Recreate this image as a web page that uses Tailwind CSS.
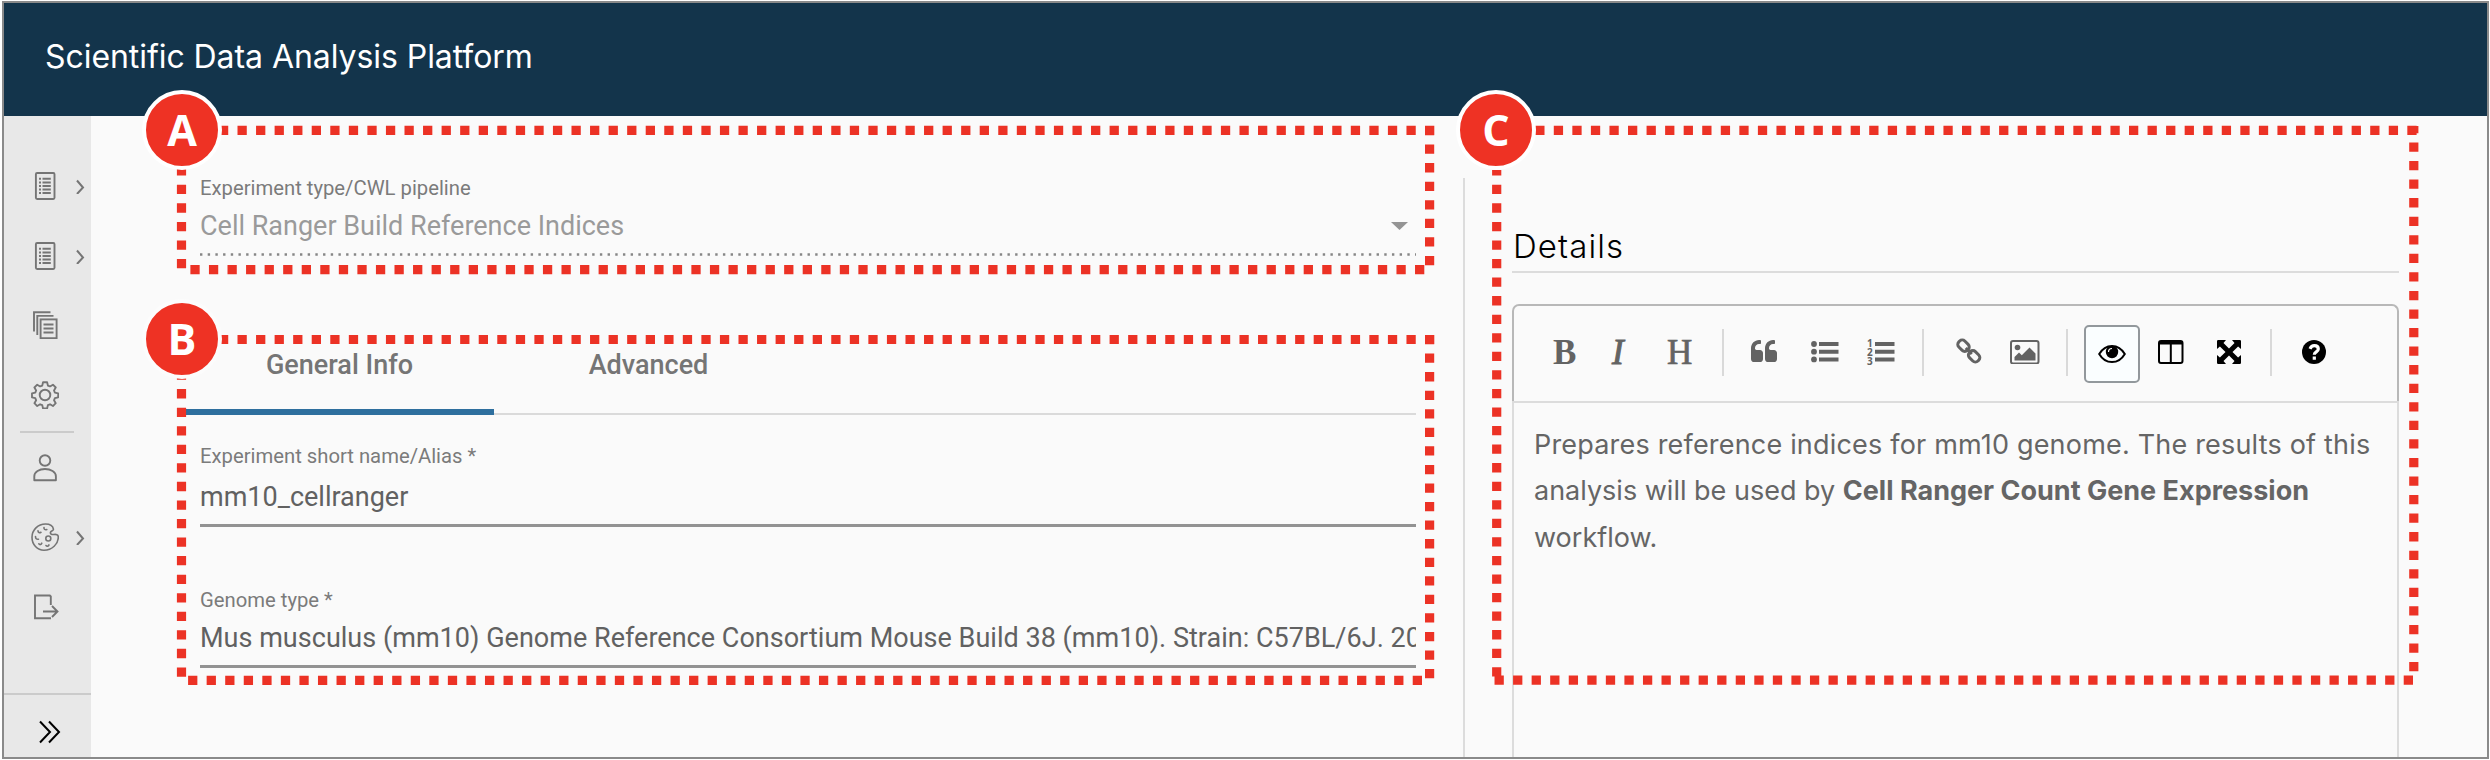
<!DOCTYPE html>
<html lang="en">
<head>
<meta charset="utf-8">
<title>Scientific Data Analysis Platform</title>
<script src="https://cdn.jsdelivr.net/npm/@tailwindcss/browser@4"></script>
</head>
<body class="relative h-[760px] w-[2490px] overflow-hidden bg-white pt-px pl-[2px] font-['Roboto',sans-serif]">
<div class="flex h-[758px] w-[2487px] flex-col border-2 border-[#8a8a8a] bg-[#fafafa]">
  <header class="flex h-[113px] shrink-0 items-center bg-[#13344b] pb-[5px] pl-[41px]">
    <h1 class="font-['Inter',sans-serif] text-[32px] leading-none tracking-[-0.06px] text-white">Scientific Data Analysis Platform</h1>
  </header>
  <div class="flex min-h-0 flex-1">
    <nav class="flex w-[87px] shrink-0 flex-col bg-[#e8e8e8] pt-[35px] text-[#757575]">
      <a class="flex h-[69.7px] items-center pl-[27px]">
        <svg class="size-7" viewBox="0 0 28 28" fill="none" stroke="currentColor" stroke-width="1.9"><rect x="4.9" y="1" width="18.6" height="26" rx="1.2"/><path d="M11.5 6.8h8.300M11.500 10.500h8.300M11.500 14h8.300M11.500 17.500h8.300M11.500 21h8.300M8 6.800h2M8 10.500h2M8 14h2M8 17.500h2M8 21h2"/></svg>
        <svg class="ml-4 h-4 w-2.5" viewBox="0 0 10 16" fill="none" stroke="currentColor" stroke-width="2"><path d="M2 2.500l6 7-6 6.500"/></svg>
      </a>
      <a class="flex h-[69.7px] items-center pl-[27px]">
        <svg class="size-7" viewBox="0 0 28 28" fill="none" stroke="currentColor" stroke-width="1.9"><rect x="4.9" y="1" width="18.6" height="26" rx="1.2"/><path d="M11.5 6.8h8.300M11.500 10.500h8.300M11.500 14h8.300M11.500 17.500h8.300M11.500 21h8.300M8 6.800h2M8 10.500h2M8 14h2M8 17.500h2M8 21h2"/></svg>
        <svg class="ml-4 h-4 w-2.5" viewBox="0 0 10 16" fill="none" stroke="currentColor" stroke-width="2"><path d="M2 2.500l6 7-6 6.500"/></svg>
      </a>
      <a class="flex h-[69.7px] items-center pl-[27px]">
        <svg class="size-7" viewBox="0 0 28 28" fill="none" stroke="currentColor" stroke-width="1.9"><rect x="9.600" y="8.400" width="16" height="18.800"/><path d="M3 20.500V1.300h16.500M6.300 24V4.900H22.500M12.500 13.500h10M12.500 17.500h10M12.500 21.500h10"/></svg>
      </a>
      <a class="flex h-[69.7px] items-center pl-[27px]">
        <svg class="size-7" viewBox="0 0 28 28" fill="none" stroke="currentColor" stroke-width="1.9" stroke-linejoin="round"><circle cx="14" cy="14" r="5.300"/><path d="M11.900 1h4.200l.8 3.400 2.200.9 3-1.800 2.900 2.900-1.800 3 .9 2.200 3.400.8v4.200l-3.400.8-.9 2.200 1.800 3-2.900 2.900-3-1.800-2.200.9-.8 3.400h-4.200l-.8-3.400-2.200-.9-3 1.800L3 22.600l1.800-3-.9-2.200-3.400-.8v-4.200l3.400-.8.9-2.200-1.800-3L5.900 3.500l3 1.800 2.200-.9z" transform="translate(.5 .3) scale(.97)"/></svg>
      </a>
      <hr class="mx-4 mt-[1px] h-[2px] w-[54px] shrink-0 border-0 bg-[#cbcbcb]">
      <a class="flex h-[69.7px] items-center pl-[27px]">
        <svg class="size-7" viewBox="0 0 28 28" fill="none" stroke="currentColor" stroke-width="1.9" stroke-linejoin="round"><circle cx="14" cy="6.500" r="5.300"/><path d="M3.300 26.300v-4c0-4.500 5-7.300 10.700-7.300s10.900 2.800 10.900 7.300v4z"/></svg>
      </a>
      <a class="flex h-[69.7px] items-center pl-[27px]">
        <svg class="size-7" viewBox="0 0 28 28" fill="none" stroke="currentColor" stroke-width="1.600" stroke-linejoin="round" stroke-linecap="round"><path d="M22.500 6.300C21.900 3 18.500 1 14.500 1 7 1 1 7 1 14.300 1 21.800 6.300 27.200 13 27.200c8 0 14.300-6.200 14.300-13.200 0-2.500-2.300-2.800-4.300-2.500-2.500.3-4-.6-3.500-2.300.4-1.200 3-1.200 3-2.900z"/><circle cx="17.300" cy="15.500" r="2.500"/><path d="M13 4.500c-.3 1.800 1 2.700 2.800 2M7 7.800c.2 1.700 1.500 2.400 3 1.500M4.500 13.500c0 2 1 3 3 2.700M7.800 20.800c.9 1.200 2.400 1 3-.6M15 22.500c.9 1.200 2.400 1 3-.6"/></svg>
        <svg class="ml-4 h-4 w-2.5" viewBox="0 0 10 16" fill="none" stroke="currentColor" stroke-width="2"><path d="M2 2.500l6 7-6 6.500"/></svg>
      </a>
      <a class="flex h-[69.7px] items-center pl-[27px]">
        <svg class="size-7" viewBox="0 0 28 28" fill="none" stroke="currentColor" stroke-width="1.9"><path d="M19.800 12V3.500l-1-1H4V25.300h16M12 18.500h14.500M21 13l5.500 5.500L21 24"/></svg>
      </a>
      <div class="mt-auto flex h-[64px] items-start border-t-2 border-[#cbcbcb] pt-[25px] pl-[35px] text-black">
        <svg class="h-6 w-[22px]" viewBox="0 0 22 24" fill="none" stroke="currentColor" stroke-width="2"><path d="M1 1.500L11 12 1 22.500M10 1.500L20 12 10 22.500"/></svg>
      </div>
    </nav>

    <main class="flex w-[1372px] shrink-0 flex-col pr-[47px] pl-[94px]">
      <section class="flex flex-col pt-[60px] pl-[15px]">
        <label class="text-[20.25px] leading-6 text-[#7b7b7b]">Experiment type/CWL pipeline</label>
        <div class="mt-[10px] flex h-8 items-center justify-between pr-2">
          <span class="text-[27px] leading-8 text-[#9a9a9a]">Cell Ranger Build Reference Indices</span>
          <svg class="h-2 w-[17px]" viewBox="0 0 17 8" fill="#949494"><path d="M0 0h17L8.500 8z"/></svg>
        </div>
        <svg class="mt-[11px] h-[3px] w-full" stroke="#868686" stroke-width="2.400"><path d="M0 1.500H1216" stroke-dasharray="2.400 5.290"/></svg>
      </section>
      <div class="mt-[81px] flex h-[78px] border-b-2 border-[#dadada] pt-[12px] text-[27px] leading-8 font-medium text-[#757575]">
        <div class="flex h-[66px] w-[309px] justify-center border-b-6 border-[#2e6f9e]">General Info</div>
        <div class="w-[309px] text-center">Advanced</div>
      </div>
      <section class="flex flex-col pt-[29px] pl-[15px]">
        <label class="text-[20.25px] leading-6 text-[#7b7b7b]">Experiment short name/Alias *</label>
        <div class="mt-[13px] h-[46px] border-b-3 border-[#929292] text-[27px] leading-8 text-[#616161]">mm10_cellranger</div>
        <label class="mt-[61px] text-[20.25px] leading-6 text-[#7b7b7b]">Genome type *</label>
        <div class="mt-[10px] h-[46px] overflow-hidden border-b-3 border-[#929292] text-[27px] leading-8 tracking-[0.02px] whitespace-nowrap text-[#616161]">Mus musculus (mm10) Genome Reference Consortium Mouse Build 38 (mm10). Strain: C57BL/6J. 20</div>
      </section>
    </main>

    <div class="mt-[62px] w-[2px] shrink-0 bg-[#dcdcdc]"></div>

    <aside class="ml-[47px] flex w-[887px] shrink-0 flex-col pt-[110px] font-['Inter',sans-serif]">
      <h2 class="h-[47px] border-b-2 border-[#dcdcdc] pl-px text-[33px] leading-10 font-light tracking-[1.1px] text-black">Details</h2>
      <div class="mt-[31px] flex h-[97px] shrink-0 rounded-t-[7px] border-2 border-b-0 border-[#b8b8b8] text-[#636363]">
        <div class="flex w-full items-center pb-[3px]">
          <div class="flex w-[208px] pl-[39px] font-['Liberation_Serif',serif] text-[35px] leading-none">
            <b class="w-[58px]">B</b><i class="w-[56px] pl-px [-webkit-text-stroke:1px_#636363]">I</i><span class="[-webkit-text-stroke:0.7px_#636363]">H</span>
          </div>
          <div class="h-[47px] w-[2px] bg-[#d9d9d9]"></div>
          <svg class="ml-[26px] size-7" viewBox="0 0 1792 1792" fill="currentColor"><path d="M832 960v384q0 80-56 136t-136 56h-384q-80 0-136-56t-56-136v-704q0-104 40.500-198.500t109.500-163.500 163.500-109.500 198.500-40.500h64q26 0 45 19t19 45v128q0 26-19 45t-45 19h-64q-106 0-181 75t-75 181v32q0 40 28 68t68 28h224q80 0 136 56t56 136zm896 0v384q0 80-56 136t-136 56h-384q-80 0-136-56t-56-136v-704q0-104 40.500-198.500t109.500-163.500 163.500-109.500 198.500-40.500h64q26 0 45 19t19 45v128q0 26-19 45t-45 19h-64q-106 0-181 75t-75 181v32q0 40 28 68t68 28h224q80 0 136 56t56 136z"/></svg>
          <svg class="ml-[33px] size-7" viewBox="0 0 28 28" fill="currentColor"><circle cx="3" cy="6" r="2.900"/><circle cx="3" cy="13.700" r="2.900"/><circle cx="3" cy="21.400" r="2.900"/><path d="M8 4h19.500v4H8zM8 11.700h19.500v4H8zM8 19.400h19.500v4H8z"/></svg>
          <svg class="ml-[28px] size-7 overflow-visible" viewBox="0 0 28 28" fill="currentColor"><path d="M8 4h19.500v4H8zM8 11.700h19.500v4H8zM8 19.400h19.500v4H8z"/><g font-family="Noto Sans, sans-serif" font-size="10" font-weight="700"><text x="0" y="8.500">1</text><text x="0" y="17.500">2</text><text x="0" y="26.500">3</text></g></svg>
          <div class="ml-[27px] h-[47px] w-[2px] bg-[#d9d9d9]"></div>
          <svg class="ml-[32px] mb-[2px] size-7" viewBox="0 0 28 28" fill="none" stroke="currentColor" stroke-width="3"><g transform="rotate(45 12.800 14)"><rect x="-.7" y="9.800" width="12" height="8.400" rx="3.600"/><rect x="14.300" y="9.800" width="12" height="8.400" rx="3.600"/><path d="M8.500 14h8.600"/></g></svg>
          <svg class="ml-[26px] h-6 w-[30px]" viewBox="0 0 30 24"><rect x="1" y="1" width="27.500" height="22.500" rx="2" fill="none" stroke="currentColor" stroke-width="2"/><circle cx="7.500" cy="7.500" r="2.800" fill="currentColor"/><path d="M4.500 20.500v-3.500l4.500-4.500 2.800 2.800 7.700-7.800 6 6v7z" fill="currentColor"/></svg>
          <div class="ml-[26px] h-[47px] w-[2px] bg-[#d9d9d9]"></div>
          <div class="mt-[3px] ml-[16px] flex h-[58px] w-[56px] items-center justify-center rounded-[5px] border-2 border-[#92989c] bg-[#fafeff] text-black">
            <svg class="size-7" viewBox="0 0 28 28" fill="none" stroke="currentColor" stroke-width="2"><path d="M1.200 14C4 9.200 8.500 5.900 14 5.900s10 3.300 12.800 8.100c-2.800 4.800-7.300 8.100-12.800 8.100S4 18.800 1.200 14z"/><circle cx="14" cy="12" r="6.200" fill="currentColor" stroke="none"/><path d="M10.500 12c0-2 1.500-3.500 3.500-3.500" stroke="#fff" stroke-width="1.200"/></svg>
          </div>
          <svg class="ml-[18px] h-6 w-[26px] text-black" viewBox="0 0 26 24"><rect x="1" y="1" width="23.500" height="22" rx="2" fill="none" stroke="currentColor" stroke-width="2"/><path d="M1 1h23.500v3.500H1z" fill="currentColor"/><path d="M12.800 3v20" stroke="currentColor" stroke-width="2"/></svg>
          <svg class="ml-[33px] size-6 text-black" viewBox="0 0 24 24" fill="currentColor"><path d="M0 1.200Q0 0 1.200 0H9L6.500 2.900 12 8.500l5.500-5.600L15 0h7.800Q24 0 24 1.200V9L21.100 6.500 15.500 12l5.600 5.500L24 15v7.800Q24 24 22.800 24H15l2.500-2.900L12 15.500l-5.500 5.600L9 24H1.200Q0 24 0 22.800V15l2.900 2.500L8.500 12 2.900 6.500 0 9z"/></svg>
          <div class="ml-[29px] h-[47px] w-[2px] bg-[#d9d9d9]"></div>
          <svg class="ml-[30px] size-6 text-black" viewBox="0 0 24 24"><circle cx="12" cy="12" r="12" fill="currentColor"/><path d="M8 8.800C9 6.600 10.400 5.700 12.300 5.700c2.400 0 4 1.300 4 3.200 0 3-4 2.900-4 5.800M12.300 16.500v3.300" fill="none" stroke="#fff" stroke-width="3.200"/></svg>
        </div>
      </div>
      <div class="flex-1 border-2 border-b-0 border-[#dcdcdc] pt-[19px] pl-[20px] text-[27px] leading-[46.4px] text-[#656565]">
        <p class="whitespace-nowrap"><span class="tracking-[0.19px]">Prepares reference indices for mm10 genome. The results of this</span><br>analysis will be used by <b>Cell Ranger Count Gene Expression</b><br>workflow.</p>
      </div>
    </aside>
  </div>
</div>

<!-- Callout frames -->
<svg class="absolute top-0 left-0 h-[760px] w-[2490px]" fill="none" stroke="#ec3225" stroke-width="9.200" stroke-dasharray="9.280 9.275">
  <path d="M1434.300 130.400H186M1429.600 126V265.500M1424.300 269.600H186M181.500 268.300V168"/>
  <path d="M1434.300 339.500H186M1429.600 335V679M1422 680.300H186M181.500 676.700V378"/>
  <path d="M2416.600 130.400H1500M2413 680.200H1492M1496.700 676.500V170"/>
  <path d="M2413.800 126V673" stroke-dashoffset="2.100"/>
</svg>
<div class="absolute top-[90px] left-[142px] flex size-20 items-center justify-center rounded-full border-4 border-white bg-[#ee3224] pb-px font-['Open_Sans',sans-serif] text-[43px] leading-none font-bold text-white">A</div>
<div class="absolute top-[299px] left-[142px] flex size-20 items-center justify-center rounded-full border-4 border-[#fcfcfc] bg-[#ee3224] pb-px font-['Open_Sans',sans-serif] text-[43px] leading-none font-bold text-white">B</div>
<div class="absolute top-[90px] left-[1456px] flex size-20 items-center justify-center rounded-full border-4 border-white bg-[#ee3224] pb-px font-['Open_Sans',sans-serif] text-[43px] leading-none font-bold text-white">C</div>
</body>
</html>
